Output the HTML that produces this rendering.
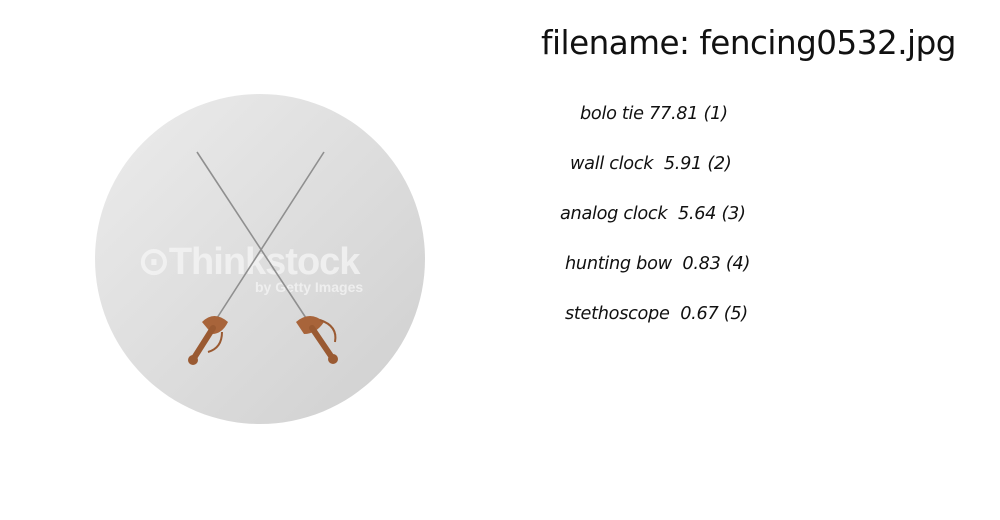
<!DOCTYPE html>
<html><head><style>
body{margin:0;width:1000px;height:520px;background:#fff;overflow:hidden;font-family:"DejaVu Sans","Liberation Sans",sans-serif;position:relative}
.t{position:absolute;left:541px;top:24px;font-size:32.6px;color:#111;white-space:nowrap;letter-spacing:-0.5px}
.i{position:absolute;font-style:italic;font-size:17.7px;color:#111;white-space:nowrap;letter-spacing:-0.3px}
</style></head><body>
<svg width="1000" height="520" style="position:absolute;left:0;top:0">
<defs><linearGradient id="g" x1="0" y1="0" x2="1" y2="1"><stop offset="0" stop-color="#ececec"/><stop offset="1" stop-color="#cfcfcf"/></linearGradient></defs>
<circle cx="260" cy="259" r="165" fill="url(#g)"/>
<text x="138" y="274" font-family="Liberation Sans" font-weight="bold" font-size="38" fill="#f6f6f6" opacity="0.75" letter-spacing="-1">⊙Thinkstock</text>
<text x="255" y="292" font-family="Liberation Sans" font-weight="bold" font-size="14" fill="#f6f6f6" opacity="0.75">by Getty Images</text>
<line x1="197" y1="152" x2="306" y2="318" stroke="#8f8f8f" stroke-width="1.6"/>
<line x1="324" y1="152" x2="217" y2="318" stroke="#8f8f8f" stroke-width="1.6"/>
<path d="M202 322 Q214 310 228 322 Q222 334 212 334 Z" fill="#a8643a"/>
<line x1="213" y1="328" x2="194" y2="358" stroke="#9a5a32" stroke-width="6" stroke-linecap="round"/>
<circle cx="193" cy="360" r="5" fill="#9a5a32"/>
<path d="M296 322 Q310 310 324 322 Q316 334 304 334 Z" fill="#a8643a"/>
<line x1="312" y1="328" x2="331" y2="356" stroke="#9a5a32" stroke-width="6" stroke-linecap="round"/>
<circle cx="333" cy="359" r="5" fill="#9a5a32"/>
<path d="M320 320 Q338 326 335 342" stroke="#9a5a32" stroke-width="2" fill="none"/>
<path d="M222 332 Q222 348 208 352" stroke="#9a5a32" stroke-width="2" fill="none"/>
</svg>
<div class="t">filename: fencing0532.jpg</div>
<div class="i" style="left:580px;top:104px">bolo tie 77.81 (1)</div>
<div class="i" style="left:570px;top:154px">wall clock&nbsp; 5.91 (2)</div>
<div class="i" style="left:560px;top:204px">analog clock&nbsp; 5.64 (3)</div>
<div class="i" style="left:565px;top:254px">hunting bow&nbsp; 0.83 (4)</div>
<div class="i" style="left:565px;top:304px">stethoscope&nbsp; 0.67 (5)</div>
</body></html>
